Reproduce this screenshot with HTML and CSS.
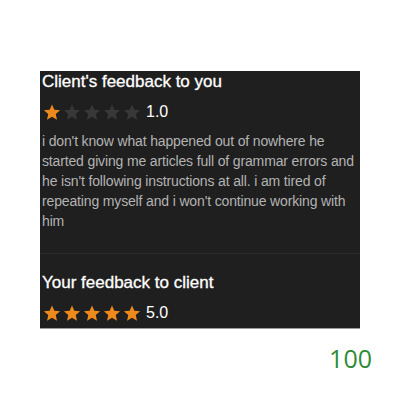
FILE: index.html
```html
<!DOCTYPE html>
<html lang="en">
<head>
    <meta charset="UTF-8">
    <title>Feedback</title>
    <link rel="stylesheet" href="styles.css">
</head>
<body>
    <div class="feedback">
        <section class="block">
            <h2>Client's feedback to you</h2>
            <div class="rating">
                <span class="stars">
                    <svg class="star on" viewBox="0 0 24 24"><path d="M12 3l2.8 6.2 6.9.7-5.2 4.6 1.5 6.7L12 17.8l-6 3.4 1.5-6.7-5.2-4.6 6.9-.7z"/></svg>
                    <svg class="star" viewBox="0 0 24 24"><path d="M12 3l2.8 6.2 6.9.7-5.2 4.6 1.5 6.7L12 17.8l-6 3.4 1.5-6.7-5.2-4.6 6.9-.7z"/></svg>
                    <svg class="star" viewBox="0 0 24 24"><path d="M12 3l2.8 6.2 6.9.7-5.2 4.6 1.5 6.7L12 17.8l-6 3.4 1.5-6.7-5.2-4.6 6.9-.7z"/></svg>
                    <svg class="star" viewBox="0 0 24 24"><path d="M12 3l2.8 6.2 6.9.7-5.2 4.6 1.5 6.7L12 17.8l-6 3.4 1.5-6.7-5.2-4.6 6.9-.7z"/></svg>
                    <svg class="star" viewBox="0 0 24 24"><path d="M12 3l2.8 6.2 6.9.7-5.2 4.6 1.5 6.7L12 17.8l-6 3.4 1.5-6.7-5.2-4.6 6.9-.7z"/></svg>
                </span>
                <span class="score">1.0</span>
            </div>
            <p class="comment">i don't know what happened out of nowhere he started giving me articles full of grammar errors and he isn't following instructions at all. i am tired of repeating myself and i won't continue working with him</p>
        </section>
        <section class="block last">
            <h2>Your feedback to client</h2>
            <div class="rating">
                <span class="stars">
                    <svg class="star on" viewBox="0 0 24 24"><path d="M12 3l2.8 6.2 6.9.7-5.2 4.6 1.5 6.7L12 17.8l-6 3.4 1.5-6.7-5.2-4.6 6.9-.7z"/></svg>
                    <svg class="star on" viewBox="0 0 24 24"><path d="M12 3l2.8 6.2 6.9.7-5.2 4.6 1.5 6.7L12 17.8l-6 3.4 1.5-6.7-5.2-4.6 6.9-.7z"/></svg>
                    <svg class="star on" viewBox="0 0 24 24"><path d="M12 3l2.8 6.2 6.9.7-5.2 4.6 1.5 6.7L12 17.8l-6 3.4 1.5-6.7-5.2-4.6 6.9-.7z"/></svg>
                    <svg class="star on" viewBox="0 0 24 24"><path d="M12 3l2.8 6.2 6.9.7-5.2 4.6 1.5 6.7L12 17.8l-6 3.4 1.5-6.7-5.2-4.6 6.9-.7z"/></svg>
                    <svg class="star on" viewBox="0 0 24 24"><path d="M12 3l2.8 6.2 6.9.7-5.2 4.6 1.5 6.7L12 17.8l-6 3.4 1.5-6.7-5.2-4.6 6.9-.7z"/></svg>
                </span>
                <span class="score">5.0</span>
            </div>
        </section>
    </div>
    <div class="count">100</div>
</body>
</html>
```

FILE: styles.css
```css
body {
    margin: 0;
    padding: 71px 40px 0;
    background: #fff;
    font-family: 'Liberation Sans', Arial, sans-serif;
}

.feedback {
    width: 320px;
    background: #1f1f1f;
    border-bottom: 1px solid #9a9a9a;
    color: #fff;
}

.block {
    padding: 0 0 22px 2px;
    border-bottom: 1px solid #2c2c2c;
}

.block.last {
    padding: 18px 0 0 2px;
    border-bottom: none;
}

h2 {
    margin: 0;
    font-size: 17px;
    font-weight: normal;
    line-height: 22px;
    -webkit-text-stroke: 0.3px #fff;
}

.rating {
    display: flex;
    align-items: center;
    height: 30px;
    margin-top: 4px;
}

.stars {
    display: flex;
}

.star {
    width: 20px;
    height: 20px;
    fill: #383838;
}

.star.on {
    fill: #ee8a1c;
}

.score {
    margin-left: 4px;
    font-size: 16px;
}

.comment {
    margin: 4px 0 0;
    font-size: 14px;
    line-height: 20px;
    letter-spacing: -0.15px;
    color: #b3b3b3;
}

.count {
    width: 332px;
    margin-top: 14px;
    text-align: right;
    font-family: 'Open Sans', sans-serif;
    font-size: 25px;
    line-height: 30px;
    color: #2e8b35;
}
```
